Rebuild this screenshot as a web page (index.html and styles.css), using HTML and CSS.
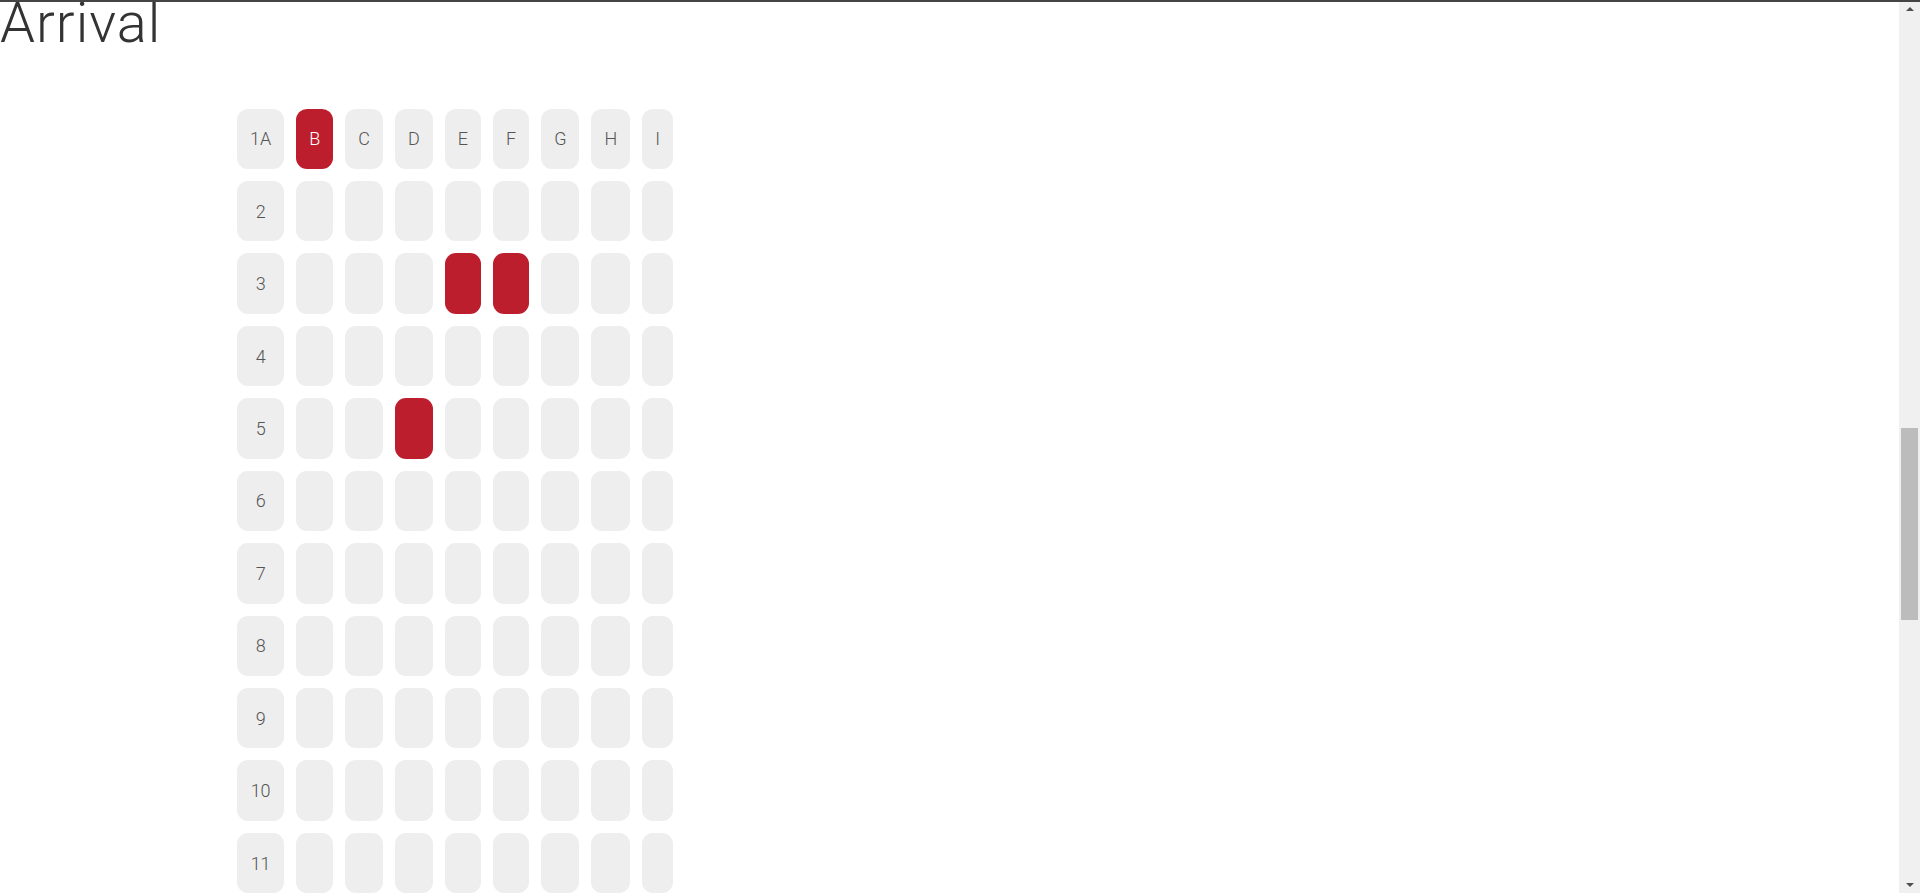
FILE: index.html
```html
<!DOCTYPE html>
<html lang="en">
<head>
<meta charset="utf-8">
<title>Seat map</title>
<link rel="stylesheet" href="styles.css">
</head>
<body>
<div class="frame-line"></div>
<div class="scrollbar" aria-hidden="true">
  <div class="sb-arrow sb-up"></div>
  <div class="sb-track"><div class="sb-thumb"></div></div>
  <div class="sb-arrow sb-down"></div>
</div>
<main class="page">
  <section class="leg" id="departure">
    <h1 class="leg-title">Departure</h1>
    <div class="seatmap" id="map-departure"></div>
  </section>
  <section class="leg" id="arrival">
    <h1 class="leg-title">Arrival</h1>
    <div class="seatmap" id="map-arrival"></div>
  </section>
</main>
<script src="script.js"></script>
</body>
</html>
```

FILE: styles.css
```css
html, body {
  margin: 0;
  padding: 0;
  background: #ffffff;
}
body {
  font-family: Roboto, "Liberation Sans", Arial, sans-serif;
  color: #333333;
}
.frame-line {
  position: fixed;
  top: 0;
  left: 0;
  right: 0;
  height: 2px;
  background: #444444;
  z-index: 10;
}
.scrollbar {
  position: fixed;
  top: 0;
  right: 0;
  bottom: 0;
  width: 21px;
  background: #f0f0f0;
  display: flex;
  flex-direction: column;
  z-index: 5;
}
.sb-arrow {
  height: 17px;
  display: flex;
  align-items: center;
  justify-content: center;
}
.sb-up::before,
.sb-down::before {
  content: "";
  width: 0;
  height: 0;
  border-left: 4px solid transparent;
  border-right: 4px solid transparent;
}
.sb-up::before {
  border-bottom: 4px solid #505050;
}
.sb-down::before {
  border-top: 4px solid #505050;
}
.sb-track {
  flex: 1;
  display: flex;
  flex-direction: column;
  padding: 411px 2px 0 2px;
}
.sb-thumb {
  height: 192px;
  background: #bcbcbc;
}
.page {
  padding-bottom: 120px;
}
.leg {
  display: flex;
  flex-direction: column;
}
.leg-title {
  margin: 0 0 50px 0;
  font-family: Roboto, "Open Sans", sans-serif;
  font-size: 56px;
  font-weight: 300;
  letter-spacing: 1px;
  line-height: 72px;
  color: #333333;
}
.seatmap {
  display: grid;
  grid-template-columns: repeat(9, auto);
  justify-content: start;
  gap: 12px;
  margin-left: 237px;
  margin-bottom: 60px;
}
.seat {
  display: flex;
  align-items: center;
  justify-content: center;
  height: 60.45px;
  padding: 0 13px;
  box-sizing: border-box;
  border-radius: 11px;
  background: #eeeeee;
  font-size: 18px;
  font-weight: 300;
  color: #555555;
}
.seat.taken {
  background: #bd1e2e;
  color: #ffffff;
}
```

FILE: script.js
```js
(function () {
  var letters = ["A", "B", "C", "D", "E", "F", "G", "H", "I"];
  var rows = 24;
  function build(id, taken) {
    var map = document.getElementById(id);
    for (var r = 1; r <= rows; r++) {
      for (var c = 0; c < letters.length; c++) {
        var seat = document.createElement("div");
        seat.className = "seat";
        var key = r + letters[c];
        if (taken.indexOf(key) !== -1) seat.className += " taken";
        if (r === 1) {
          seat.textContent = c === 0 ? "1A" : letters[c];
        } else if (c === 0) {
          seat.textContent = String(r);
        }
        map.appendChild(seat);
      }
    }
  }
  build("map-departure", ["2C", "4F"]);
  build("map-arrival", ["1B", "3E", "3F", "5D"]);
  var first = document.querySelector("#map-arrival .seat");
  var y = first.getBoundingClientRect().top + window.scrollY - 109;
  window.scrollTo(0, y);
})();
```
